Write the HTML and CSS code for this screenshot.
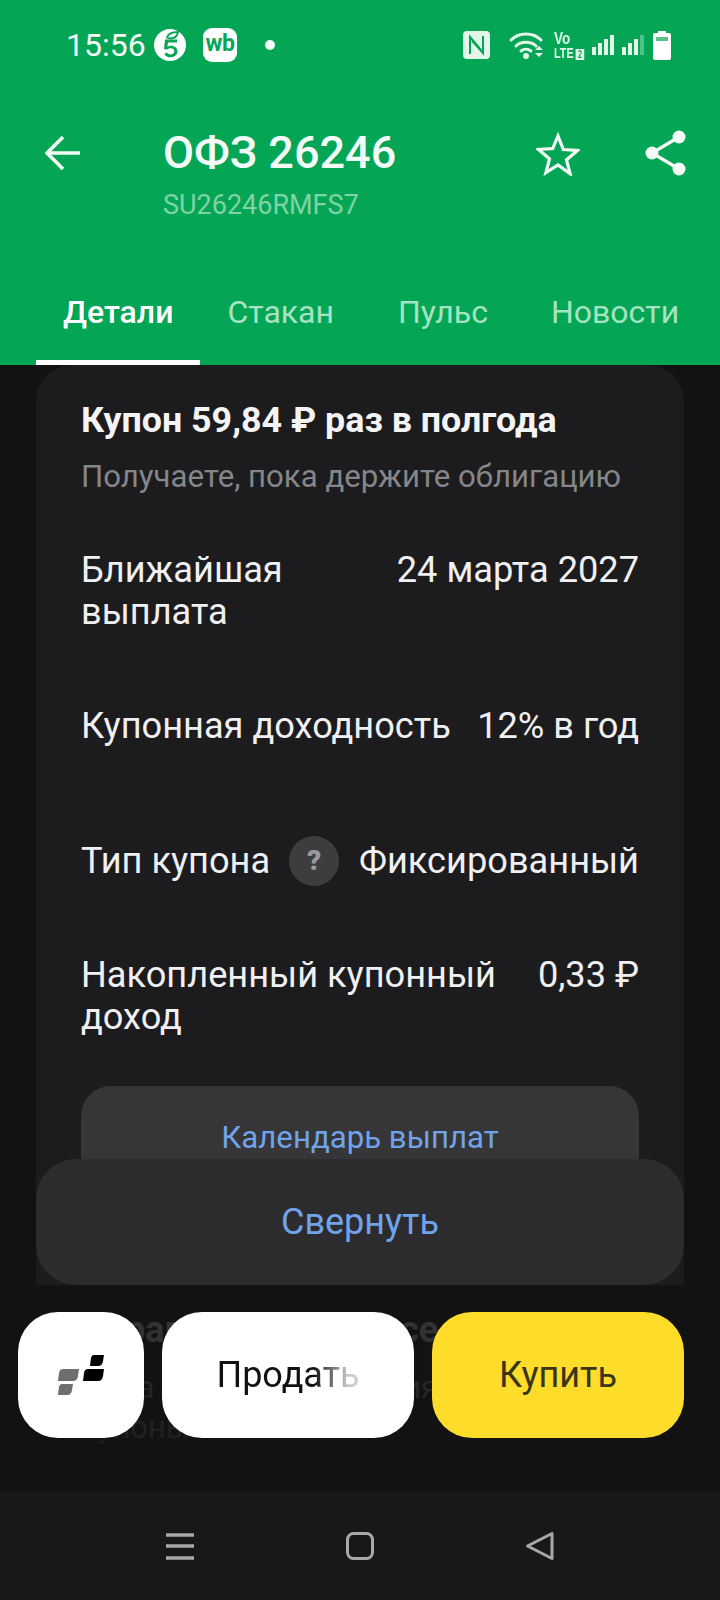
FILE: index.html
```html
<!DOCTYPE html>
<html lang="ru">
<head>
<meta charset="utf-8">
<title>ОФЗ 26246</title>
<link rel="stylesheet" href="styles.css">
</head>
<body>
<div class="screen">
  <header class="top">
    <div class="status">
      <div class="status-left">
        <span class="time">15:56</span>
        <span class="app-five">
          <svg viewBox="0 0 32 32" width="32" height="32"><circle cx="16" cy="16" r="16" fill="#fff"/><path d="M13 8.500c1-3.500 5-5.500 11-5.500-.5 3.500-3 6.500-8 6.500z" fill="none" stroke="#04a655" stroke-width="1.800"/><path d="M11 10.500h12v3h-9l-.7 4.200c1-.7 2.400-1 3.700-1 3.700 0 6.500 2.300 6.500 5.600 0 3.600-3 6-6.800 6-2.800 0-5.200-1.200-6.400-3.400l2.600-1.500c.8 1.300 2.200 2 3.800 2 2.100 0 3.700-1.200 3.700-3.100s-1.500-3.100-3.600-3.100c-1.400 0-2.700.5-3.500 1.400l-3.300-.4z" fill="#04a655"/></svg>
        </span>
        <span class="app-wb">wb</span>
        <span class="dot"></span>
      </div>
      <div class="status-right">
        <svg class="nfc" viewBox="0 0 27 28" width="27" height="28"><rect width="27" height="28" rx="4" fill="#e3f6ea"/><path d="M7 23V6l11 13M20 5v17L9 9.500" fill="none" stroke="#04a655" stroke-width="2"/></svg>
        <svg class="wifi" viewBox="0 0 34 28" width="34" height="28"><g fill="none" stroke="#e3f6ea" stroke-width="3" stroke-linecap="round"><path d="M2 9c8-8 22-8 30 0"/><path d="M7 15c5-5 15-5 20 0"/><path d="M12 20c3-2.500 7-2.500 10 0"/></g><circle cx="17" cy="25" r="3" fill="#e3f6ea"/><path d="M26 19l4-4 4 4zM26 22l4 4 4-4z" fill="#e3f6ea"/></svg>
        <span class="volte"><span class="vo">Vo</span><span class="lte">LTE<span class="two">2</span></span></span>
        <svg class="signal" viewBox="0 0 22 20" width="22" height="20"><g fill="#e3f6ea"><rect x="0" y="12" width="4" height="8"/><rect x="6" y="8" width="4" height="12"/><rect x="12" y="4" width="4" height="16"/><rect x="18" y="0" width="4" height="20"/></g></svg>
        <svg class="signal" viewBox="0 0 22 20" width="22" height="20"><g fill="#e3f6ea"><rect x="0" y="12" width="4" height="8"/><rect x="6" y="8" width="4" height="12"/><rect x="12" y="4" width="4" height="16"/><rect x="18" y="0" width="4" height="20" opacity=".35"/></g></svg>
        <svg class="battery" viewBox="0 0 18 29" width="18" height="29"><path d="M5 0h8v2h3a2 2 0 0 1 2 2v23a2 2 0 0 1-2 2H2a2 2 0 0 1-2-2V4a2 2 0 0 1 2-2h3z" fill="#fff"/><rect x="3" y="6" width="12" height="4" fill="#5fbd87"/></svg>
      </div>
    </div>
    <div class="bar">
      <svg class="back" viewBox="0 0 36 36" width="36" height="36"><path d="M35 18H3M18 2L2 18l16 16" fill="none" stroke="#f2fbf6" stroke-width="3.600"/></svg>
      <div class="titles">
        <div class="title">ОФЗ 26246</div>
        <div class="isin">SU26246RMFS7</div>
      </div>
      <svg class="star" viewBox="0 0 44 44" width="44" height="44"><path d="M22 4l5.300 13.500 14.200 1-11 9.300 3.600 13.900L22 33l-12.100 7.700 3.600-13.900-11-9.300 14.200-1z" fill="none" stroke="#f2fbf6" stroke-width="3.200"/></svg>
      <svg class="share" viewBox="0 0 41 46" width="41" height="46"><g fill="#f6fcf8"><circle cx="7" cy="23" r="6.500"/><circle cx="34" cy="7" r="6.500"/><circle cx="34" cy="39" r="6.500"/></g><path d="M34 7L7 23l27 16" fill="none" stroke="#f6fcf8" stroke-width="3.200"/></svg>
    </div>
    <nav class="tabs">
      <span class="tab tab-active">Детали</span>
      <span class="tab">Стакан</span>
      <span class="tab tab-wide">Пульс</span>
      <span class="tab">Новости</span>
    </nav>
  </header>

  <main class="content">
    <section class="card">
      <h2 class="card-title">Купон 59,84 ₽ раз в полгода</h2>
      <p class="card-sub">Получаете, пока держите облигацию</p>
      <div class="row row-next">
        <span class="label label-narrow">Ближайшая выплата</span>
        <span class="value">24 марта 2027</span>
      </div>
      <div class="row row-yield">
        <span class="label">Купонная доходность</span>
        <span class="value">12% в год</span>
      </div>
      <div class="row row-type">
        <span class="label label-help">Тип купона <span class="help">?</span></span>
        <span class="value">Фиксированный</span>
      </div>
      <div class="row row-accrued">
        <span class="label label-accrued">Накопленный купонный доход</span>
        <span class="value">0,33 ₽</span>
      </div>
      <button class="calendar">Календарь выплат</button>
      <h3 class="next-title">Справка об интересе</h3>
      <p class="next-text">Пока только это не влияет на<br>купоны</p>
    </section>
  </main>

  <div class="fade"></div>
  <button class="collapse">Свернуть</button>
  <div class="actions">
    <button class="btn btn-logo">
      <svg viewBox="0 0 46 40" width="46" height="40"><path d="M5 14h16l-1 7c-.4 3-2 5-5 5H0l1-8c.3-2.500 2-4 4-4zM4 29h11l-1 6c-.4 3-2 5-5 5H0l.8-7c.3-2.500 1.400-4 3.200-4z" fill="#6e6e6e"/><path d="M36 0h10l-1 6c-.4 3-2 5-5 5H32l.8-7c.3-2.500 1.400-4 3.200-4zM30 14h16l-1 7c-.4 3-2 5-5 5H25l1-8c.3-2.500 2-4 4-4z" fill="#000"/></svg>
    </button>
    <button class="btn btn-sell"><span class="sell-text">Продать</span></button>
    <button class="btn btn-buy">Купить</button>
  </div>

  <footer class="navbar">
    <svg viewBox="0 0 30 28" width="30" height="28"><path d="M1 3h28M1 14h28M1 26h28" stroke="#a8a8a8" stroke-width="3.400"/></svg>
    <svg viewBox="0 0 28 28" width="28" height="28"><rect x="1.500" y="1.500" width="25" height="25" rx="6" fill="none" stroke="#a8a8a8" stroke-width="3"/></svg>
    <svg class="nav-back" viewBox="0 0 30 30" width="30" height="30"><path d="M27 2.500v25L2.500 15z" fill="none" stroke="#a8a8a8" stroke-width="3" stroke-linejoin="round"/></svg>
  </footer>
</div>
</body>
</html>
```
FILE: styles.css
```css
* { box-sizing: border-box; }
html, body { margin: 0; padding: 0; }
body { background: #121212; font-family: Roboto, "Noto Sans", sans-serif; }
button { font-family: inherit; border: 0; padding: 0; }
.screen { position: relative; width: 720px; height: 1600px; overflow: hidden; background: #121212; }

.top { height: 365px; background: #04a655; color: #fff; }
.status { height: 90px; display: flex; justify-content: space-between; align-items: center; padding: 0 49px 0 66px; }
.status-left { display: flex; align-items: center; }
.time { font-size: 32px; color: #f4fbf7; width: 88px; }
.app-five { display: flex; width: 49px; }
.app-wb { width: 34px; height: 34px; border-radius: 9px; background: #fff; color: #04a655; font-size: 23px; font-weight: 700; line-height: 31px; text-align: center; letter-spacing: -.5px; }
.dot { width: 10px; height: 10px; border-radius: 50%; background: #f4fbf7; margin-left: 28px; }
.status-right { display: flex; align-items: center; }
.nfc { margin-right: 19px; }
.wifi { margin-right: 11px; }
.volte { display: flex; flex-direction: column; width: 30px; margin-right: 8px; color: #e3f6ea; font-family: "Liberation Sans", sans-serif; font-weight: 700; }
.vo { font-size: 17px; line-height: 15px; transform: scaleX(.8); transform-origin: left; }
.lte { font-size: 15px; line-height: 14px; white-space: nowrap; transform: scaleX(.72); transform-origin: left; }
.two { display: inline-block; font-size: 10px; line-height: 11px; background: #e3f6ea; color: #04a655; width: 12px; margin-left: 3px; text-align: center; }
.signal { margin-right: 8px; }
.battery { margin-left: 1px; }

.bar { height: 200px; display: flex; align-items: flex-start; padding-left: 45px; }
.back { margin-top: 45px; flex: none; }
.titles { width: 372px; margin-left: 82px; }
.title { font-size: 45px; font-weight: 500; line-height: 50px; margin-top: 38px; color: #f2fbf6; white-space: nowrap; }
.isin { font-size: 27px; line-height: 32px; margin-top: 11px; color: #7fd3a5; }
.star { margin-top: 42px; flex: none; margin-left: 1px; }
.share { margin-top: 40px; flex: none; margin-left: 65px; }

.tabs { display: flex; height: 75px; padding-left: 36px; }
.tab { padding: 5px 27px 0; font-size: 32px; line-height: 34px; height: 75px; color: #a5e3c2; white-space: nowrap; }
.tab-active { color: #fff; font-weight: 500; border-bottom: 5px solid #fff; }
.tab-wide { padding: 5px 36px 0 37px; }

.content { padding: 0 36px; }
.card { background: linear-gradient(#1c1c1e 83.6%, #141414 83.7%); border-radius: 36px; padding: 34px 45px 0; height: 1100px; }
.card-title { margin: 0; font-size: 35.8px; line-height: 42px; font-weight: 700; color: #f4f4f6; white-space: nowrap; }
.card-sub { margin: 16px 0 0; font-size: 31.2px; line-height: 40px; color: #85868a; white-space: nowrap; }
.row { display: flex; justify-content: space-between; align-items: flex-start; font-size: 36.2px; line-height: 42px; color: #f0f0f2; }
.row-next { margin-top: 52px; }
.row-yield { margin-top: 72px; }
.row-type { margin-top: 93px; }
.row-accrued { margin-top: 72px; }
.label-narrow { width: 240px; }
.label-accrued { width: 425px; }
.label-help { display: flex; align-items: center; }
.help { width: 50px; height: 50px; border-radius: 50%; background: #3d3d40; color: #9a9a9c; font-size: 28px; font-weight: 900; line-height: 50px; text-align: center; margin: -4px 0 -4px 19px; }
.calendar { display: block; width: 558px; height: 130px; margin-top: 48px; padding-bottom: 27px; border-radius: 30px; background: #363638; color: #70a4ea; font-size: 31.2px; }
.next-title { margin: 93px 0 0; font-size: 36px; line-height: 42px; font-weight: 700; color: #fff; white-space: nowrap; }
.next-text { margin: 17px 0 0; font-size: 31px; line-height: 40px; color: #ddd; white-space: nowrap; }

.fade { position: absolute; left: 0; right: 0; top: 1285px; height: 207px; background: linear-gradient(rgba(18,18,18,.84), rgba(18,18,18,.93) 70%, rgba(18,18,18,.98)); }
.collapse { position: absolute; left: 36px; top: 1159px; width: 648px; height: 126px; border-radius: 40px; background: #2c2c2e; color: #70a4ea; font-size: 36px; }
.actions { position: absolute; left: 18px; top: 1312px; display: flex; gap: 18px; }
.btn { height: 126px; border-radius: 40px; font-size: 36px; display: flex; align-items: center; justify-content: center; }
.btn-logo { width: 126px; background: #fff; }
.btn-sell { width: 252px; background: #fff; }
.sell-text { background: linear-gradient(90deg, #111 68%, #ccc 92%); -webkit-background-clip: text; background-clip: text; color: transparent; }
.btn-buy { width: 252px; background: #fedc2a; color: #3a3418; }

.navbar { position: absolute; left: 0; right: 0; top: 1492px; height: 108px; background: #181818; display: flex; align-items: center; padding: 0 165px; justify-content: space-between; }
```
